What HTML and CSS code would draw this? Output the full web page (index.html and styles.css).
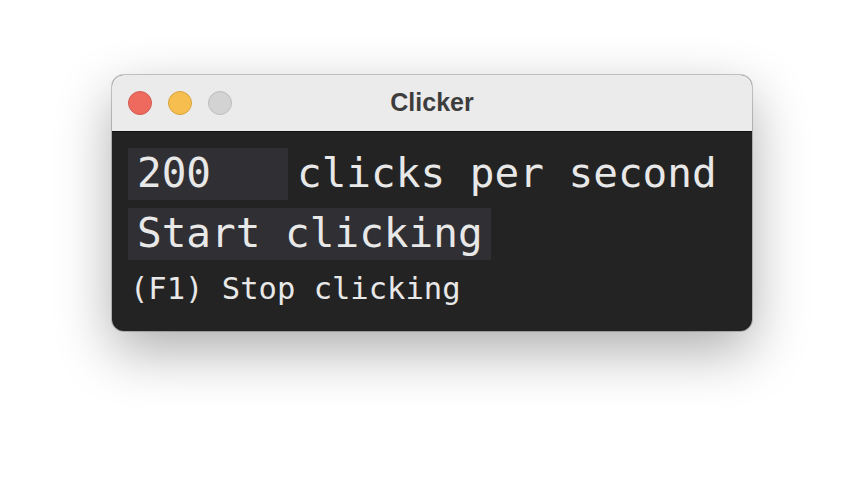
FILE: index.html
```html
<!DOCTYPE html>
<html>
<head>
<meta charset="utf-8">
<link rel="stylesheet" href="styles.css">
</head>
<body>
<div class="stage">
  <div class="window">
    <div class="titlebar">
      <div class="lights">
        <span class="light red"></span>
        <span class="light yellow"></span>
        <span class="light gray"></span>
      </div>
      <div class="title">Clicker</div>
    </div>
    <div class="content">
      <div class="row">
        <div class="input">200</div>
        <span class="label">clicks per second</span>
      </div>
      <div class="row">
        <div class="button">Start clicking</div>
      </div>
      <div class="hint">(F1) Stop clicking</div>
    </div>
  </div>
</div>
</body>
</html>
```
FILE: styles.css
```css
html, body {
  margin: 0;
  padding: 0;
  background: #ffffff;
}
.stage {
  width: 864px;
  height: 480px;
  padding: 75px 0 0 112px;
  box-sizing: border-box;
}
.window {
  width: 640px;
  height: 256px;
  border-radius: 12px;
  overflow: hidden;
  background: #232323;
  box-shadow: 0 0 0 1px rgba(0,0,0,0.2), 0 20px 55px rgba(0,0,0,0.32);
  display: flex;
  flex-direction: column;
}
.titlebar {
  height: 56px;
  background: #ebebeb;
  border-bottom: 1px solid #111;
  position: relative;
  display: flex;
  align-items: center;
  justify-content: center;
}
.lights {
  position: absolute;
  left: 16px;
  top: 16px;
  display: flex;
  gap: 16px;
}
.light {
  width: 24px;
  height: 24px;
  border-radius: 50%;
  box-sizing: border-box;
}
.red { background: #ee6a5f; border: 1px solid #d45a50; }
.yellow { background: #f5be4f; border: 1px solid #d9a33c; }
.gray { background: #d3d3d3; border: 1px solid #bdbdbd; }
.title {
  font-family: "Liberation Sans", Arial, sans-serif;
  font-weight: bold;
  font-size: 25px;
  color: #3d3d3d;
  padding-bottom: 2px;
}
.content {
  padding: 16px 16px 0 16px;
  display: flex;
  flex-direction: column;
  gap: 8px;
  font-family: "DejaVu Sans Mono", monospace;
  color: #e8e8e8;
}
.row {
  display: flex;
  align-items: center;
  gap: 9px;
}
.input, .button {
  background: #2f2f34;
  font-size: 41px;
  line-height: 50px;
  height: 52px;
  padding: 0 8px 0 9px;
}
.input {
  width: 143px;
}
.label {
  font-size: 41px;
  line-height: 50px;
  height: 52px;
}
.hint {
  font-size: 30.5px;
  line-height: 42px;
  padding-left: 2px;
}
```
